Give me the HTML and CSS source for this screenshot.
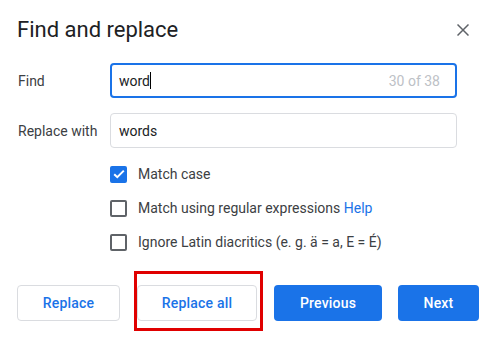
FILE: index.html
```html
<!DOCTYPE html>
<html>
<head>
<meta charset="utf-8">
<link rel="stylesheet" href="styles.css">
</head>
<body>
<div class="dialog">
  <div class="header">
    <h1 class="title">Find and replace</h1>
    <svg class="close" width="12" height="12" viewBox="0 0 12 12"><path d="M0.5 0.5 L11.5 11.5 M11.5 0.5 L0.5 11.5" stroke="#5f6368" stroke-width="1.5" fill="none"/></svg>
  </div>
  <div class="field-row">
    <label class="label">Find</label>
    <div class="input focused"><span class="value">word</span><span class="caret"></span><span class="count">30 of 38</span></div>
  </div>
  <div class="field-row">
    <label class="label">Replace with</label>
    <div class="input"><span class="value">words</span></div>
  </div>
  <div class="options">
    <div class="option"><span class="box checked"><svg width="12" height="10" viewBox="0 0 12 10"><path d="M1.2 5.2 L4.3 8.2 L10.8 1.6" stroke="#fff" stroke-width="2" fill="none"/></svg></span><span>Match case</span></div>
    <div class="option"><span class="box"></span><span>Match using regular expressions <a class="help">Help</a></span></div>
    <div class="option"><span class="box"></span><span>Ignore Latin diacritics (e. g. ä = a, E = É)</span></div>
  </div>
  <div class="buttons">
    <button class="btn outline w-replace">Replace</button>
    <div class="highlight-wrap">
      <button class="btn outline w-all">Replace all</button>
      <div class="highlight"></div>
    </div>
    <button class="btn filled w-prev">Previous</button>
    <button class="btn filled w-next">Next</button>
  </div>
</div>
</body>
</html>
```
FILE: styles.css
```css
html, body {
  margin: 0;
  padding: 0;
  background: #fff;
}
body {
  font-family: Roboto, "Liberation Sans", sans-serif;
  color: #3c4043;
  width: 501px;
  height: 342px;
  overflow: hidden;
}
.dialog {
  padding: 16px 22px 0 17px;
}
.header {
  display: flex;
  align-items: center;
  justify-content: space-between;
  height: 28px;
}
.title {
  margin: 0;
  font-size: 22px;
  font-weight: 400;
  line-height: 28px;
  color: #202124;
}
.close {
  margin-right: 10px;
  margin-top: 0;
}
.field-row {
  display: flex;
  align-items: center;
  margin-left: 1px;
}
.field-row:first-of-type { }
.header + .field-row {
  margin-top: 19px;
}
.field-row + .field-row {
  margin-top: 15px;
}
.label {
  width: 92px;
  font-size: 14px;
  color: #3c4043;
}
.input {
  box-sizing: border-box;
  width: 347px;
  height: 35px;
  border: 1px solid #dadce0;
  border-radius: 4px;
  display: flex;
  align-items: center;
  padding: 0 15px 0 8px;
  font-size: 14px;
  color: #202124;
}
.input.focused {
  border: 2px solid #1a73e8;
  padding-left: 7px;
}
.caret {
  width: 1px;
  height: 17px;
  background: #000;
  margin-left: 0;
}
.count {
  margin-left: auto;
  color: #bdc1c6;
}
.options {
  margin-top: 9px;
  margin-left: 93px;
}
.option {
  display: flex;
  align-items: center;
  height: 34px;
  font-size: 14px;
  color: #3c4043;
}
.box {
  box-sizing: border-box;
  width: 17px;
  height: 17px;
  border: 2px solid #5f6368;
  border-radius: 2px;
  margin-right: 11px;
  display: flex;
  align-items: center;
  justify-content: center;
  flex: none;
}
.box.checked {
  background: #1a73e8;
  border-color: #1a73e8;
}
.help {
  color: #1a73e8;
}
.buttons {
  display: flex;
  gap: 17px;
  margin-top: 26px;
}
.btn {
  box-sizing: border-box;
  height: 36px;
  border-radius: 4px;
  font-family: Roboto, "Liberation Sans", sans-serif;
  font-size: 14px;
  font-weight: 500;
  letter-spacing: 0.2px;
  padding: 0;
}
.outline {
  background: #fff;
  border: 1px solid #dadce0;
  color: #1a73e8;
}
.filled {
  background: #1a73e8;
  border: none;
  color: #fff;
}
.w-replace { width: 103px; }
.w-all { width: 120px; }
.w-prev { width: 108px; }
.w-next { width: 81px; margin-left: -1px; }
.highlight-wrap {
  position: relative;
  display: flex;
}
.highlight {
  position: absolute;
  left: -3px;
  top: -14px;
  width: 129px;
  height: 60px;
  box-sizing: border-box;
  border: 3px solid #e00000;
}
```
